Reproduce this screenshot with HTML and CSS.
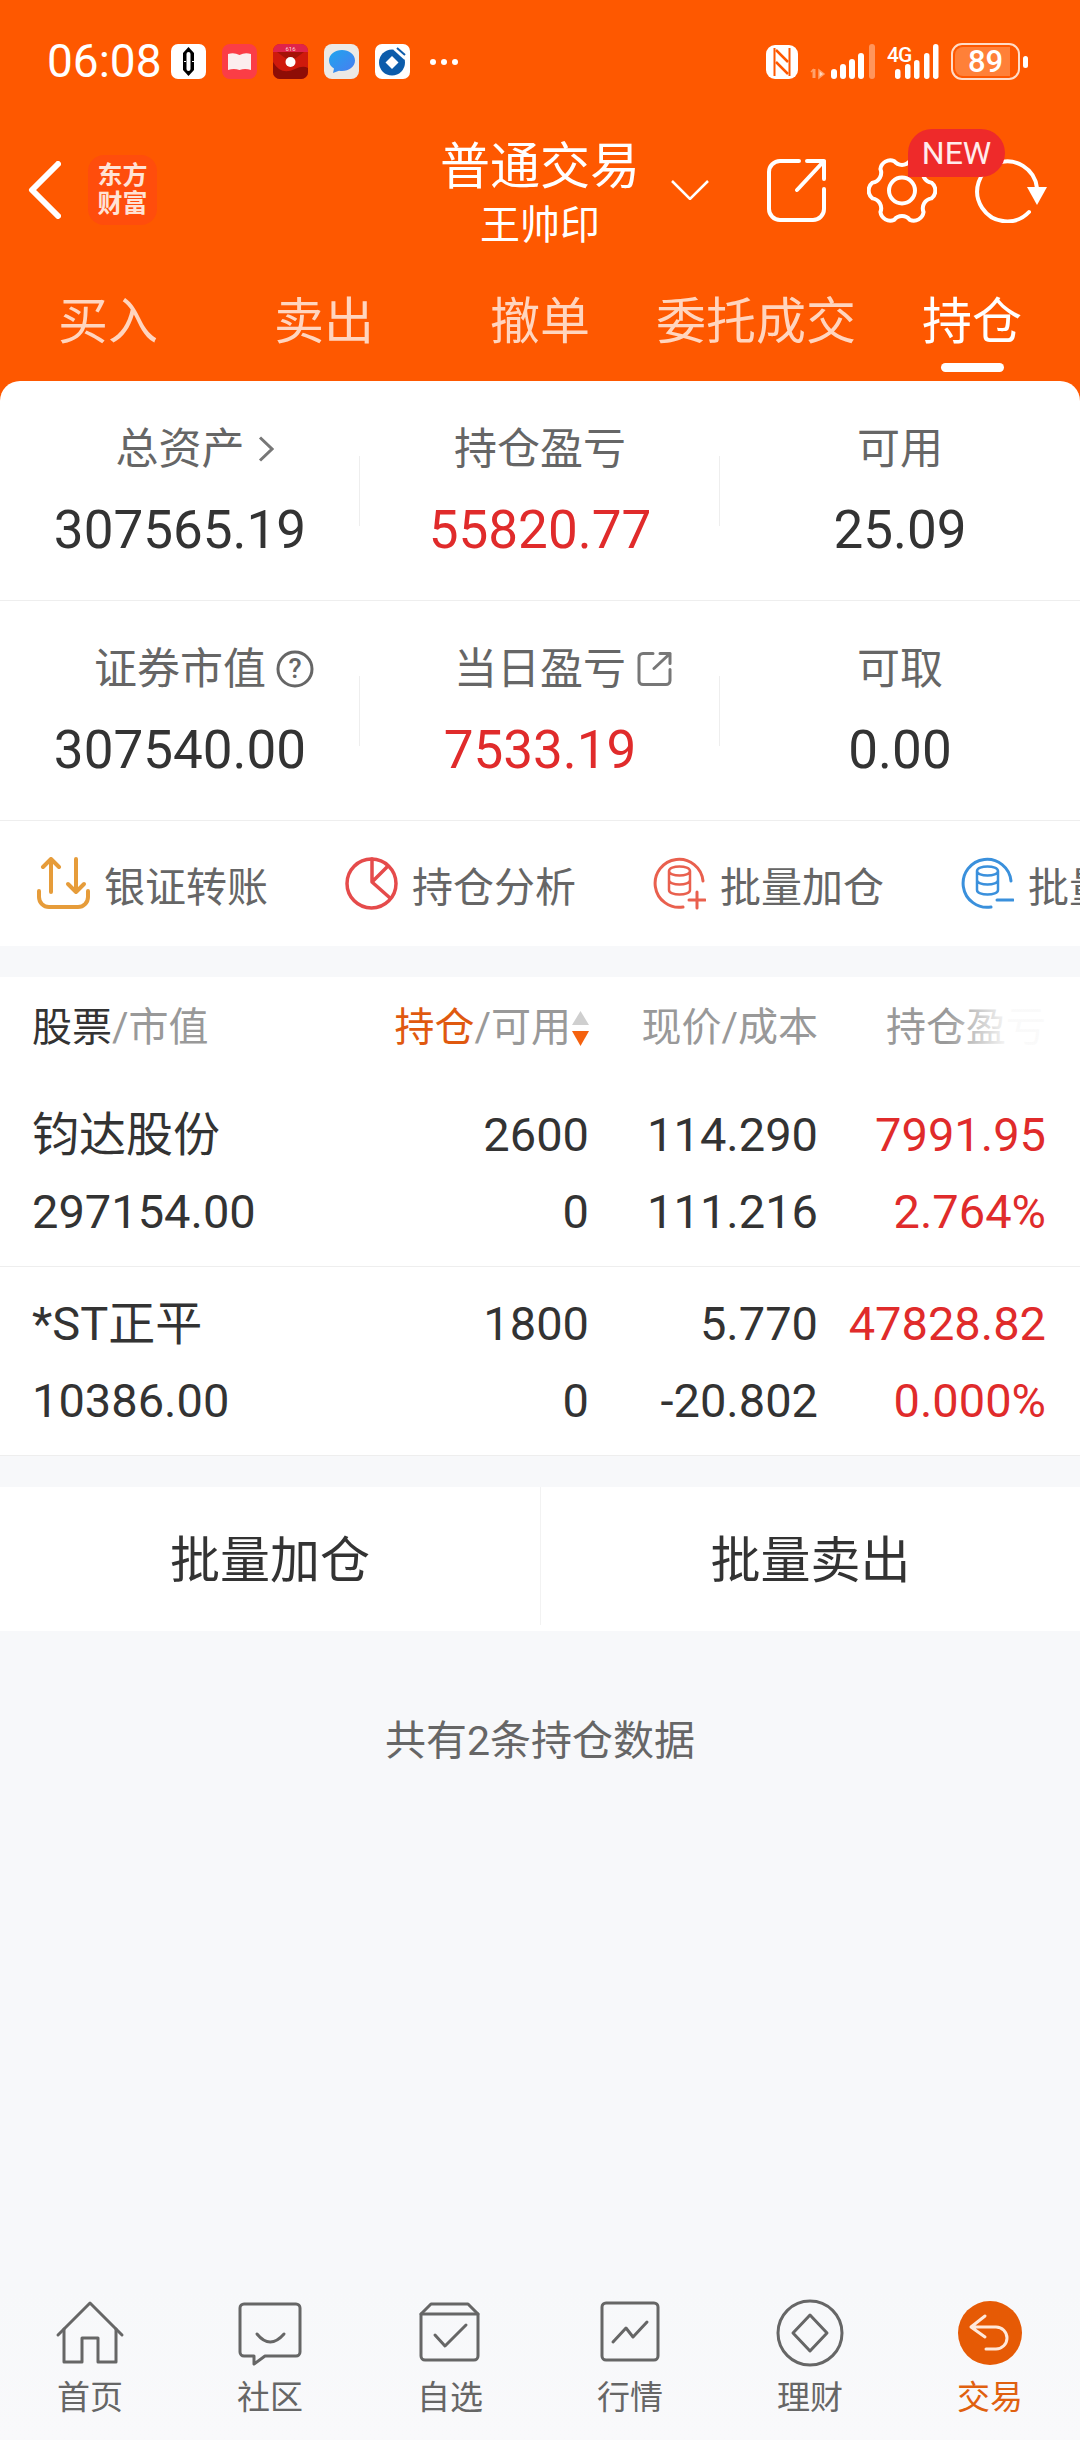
FILE: index.html
```html
<!DOCTYPE html>
<html lang="zh-CN">
<head>
    <meta charset="UTF-8">
    <meta name="viewport" content="width=device-width, initial-scale=1.0">
    <title>普通交易 - 持仓</title>
    <link rel="stylesheet" href="styles.css">
</head>
<body>
    <header class="app-header">
        <div class="status-bar">
            <div class="status-left">
                <span class="clock">06:08</span>
                <svg class="app-dot" viewBox="0 0 35 35"><rect width="35" height="35" rx="7" fill="#fff"/><path d="M17.5 3 23 9V26L17.5 32 12 26V9Z" fill="#000"/><rect x="15.5" y="8" width="4" height="19" rx="2" fill="#fff"/><path d="M9 17.5H26" stroke="#fff" stroke-width="1" stroke-dasharray="2 2"/></svg>
                <svg class="app-dot" viewBox="0 0 35 35"><rect width="35" height="35" rx="8" fill="#fb3d46"/><path d="M6 10Q12 8 17.5 11 23 8 29 10V26Q23 24 17.5 26 12 24 6 26Z" fill="#fbeeee"/></svg>
                <svg class="app-dot" viewBox="0 0 35 35"><rect width="35" height="35" rx="7" fill="#cf1a0c"/><path d="M0 18Q8 32 22 25 30 21 35 24V28a7 7 0 0 1-7 7H7a7 7 0 0 1-7-7Z" fill="#8e0d06"/><path d="M4 8H31L17.5 18Z" fill="#a51208"/><path d="M0 7a7 7 0 0 1 7-7H28a7 7 0 0 1 7 7V8H0Z" fill="#e0244a"/><text x="17.5" y="6.5" class="tiny-text" text-anchor="middle">616</text><circle cx="17.5" cy="18" r="5" fill="#fff"/></svg>
                <svg class="app-dot" viewBox="0 0 35 35"><defs><linearGradient id="bubble" x1="0" y1="0" x2="1" y2="1"><stop offset="0" stop-color="#1ea5ee"/><stop offset="1" stop-color="#4b7cf0"/></linearGradient></defs><rect width="35" height="35" rx="8" fill="#ece9e5"/><path d="M18 6C11 6 5 10.500 5 16.500 5 20 7 22.800 10 24.500L9 29 15 26.800C16 27 17 27 18 27 25 27 31 22.500 31 16.500S25 6 18 6Z" fill="url(#bubble)"/></svg>
                <svg class="app-dot" viewBox="0 0 35 35"><rect width="35" height="35" rx="7" fill="#fff"/><circle cx="17" cy="18.500" r="13" fill="#0c5cab"/><path d="M17 12 23.500 18.500 17 25 10.500 18.500Z" fill="#fff"/><path d="M20 4 31 14" stroke="#fff" stroke-width="5"/><path d="M22 4 30 11" stroke="#0c5cab" stroke-width="2"/></svg>
                <span class="more-dots"><i></i><i></i><i></i></span>
            </div>
            <div class="status-right">
                <svg class="nfc" viewBox="0 0 32 34"><rect width="32" height="34" rx="9" fill="#fff"/><path d="M8.500 3V31M23.500 3V31" stroke="#fe5800" stroke-width="2"/><path d="M10 5 22 17M10 17 22 29" stroke="#fe5800" stroke-width="2.500"/></svg>
                <svg class="signal-a" viewBox="0 0 65 36"><path d="M4 25V34" stroke="#ffa16b" stroke-width="3"/><path d="M1 28 4 25M9 26V34L14 30Z" stroke="#ffa16b" stroke-width="1.500" fill="#ffd7bf"/><g fill="#fff"><rect x="21" y="25" width="6" height="10" rx="3"/><rect x="30" y="20" width="6" height="15" rx="3"/><rect x="39" y="15" width="6" height="20" rx="3"/><rect x="48" y="9" width="6" height="26" rx="3"/></g><rect x="59" y="0" width="6" height="35" rx="3" fill="#ff955c"/></svg>
                <svg class="signal-b" viewBox="0 0 52 36"><text x="0" y="18" class="net-text">4G</text><g fill="#fff"><rect x="8" y="25" width="5.500" height="10" rx="2.700"/><rect x="18" y="20" width="5.500" height="15" rx="2.700"/><rect x="27" y="16" width="5.500" height="19" rx="2.700"/><rect x="37" y="9" width="5.500" height="26" rx="2.700"/><rect x="46" y="0" width="5.500" height="35" rx="2.700"/></g></svg>
                <div class="battery">
                    <div class="battery-body"><span class="battery-level"></span><span class="battery-num">89</span></div>
                    <span class="battery-nub"></span>
                </div>
            </div>
        </div>

        <div class="topbar">
            <div class="topbar-left">
                <svg class="back-icon" viewBox="0 0 33 58"><path d="M30 3 4 29 30 55" fill="none" stroke="#fff" stroke-width="6" stroke-linecap="round" stroke-linejoin="round"/></svg>
                <div class="brand"><span>东方</span><span>财富</span></div>
            </div>
            <div class="account">
                <div class="account-type">普通交易</div>
                <div class="account-name">王帅印</div>
            </div>
            <div class="topbar-right">
                <svg class="drop-icon" viewBox="0 0 38 20"><path d="M1 1 19 19 37 1" fill="none" stroke="#fff" stroke-width="2.500"/></svg>
                <svg class="share-icon" viewBox="0 0 60 65"><g fill="none" stroke="#fff" stroke-width="4" stroke-linecap="round" stroke-linejoin="round"><path d="M33 3H14A11 11 0 0 0 3 14V51A11 11 0 0 0 14 62H47A11 11 0 0 0 58 51V31"/><path d="M31 32 58 3M41 3H58V21"/></g></svg>
                <svg class="gear-icon" viewBox="0 0 70 67"><g fill="none" stroke="#fff" stroke-width="4" stroke-linejoin="round"><path d="M64.460 41.390A10 10 0 0 0 64.460 25.610 10 10 0 0 1 56.570 11.930 10 10 0 0 0 42.890 4.040 10 10 0 0 1 27.110 4.040 10 10 0 0 0 13.430 11.930 10 10 0 0 1 5.540 25.610 10 10 0 0 0 5.540 41.390 10 10 0 0 1 13.430 55.070 10 10 0 0 0 27.110 62.960 10 10 0 0 1 42.890 62.960 10 10 0 0 0 56.570 55.070 10 10 0 0 1 64.460 41.390Z"/><circle cx="35" cy="33.500" r="13"/></g></svg>
                <svg class="refresh-icon" viewBox="0 0 73 65"><path d="M55 54A30 30 0 1 1 63 30" fill="none" stroke="#fff" stroke-width="4" stroke-linecap="round"/><path d="M53 29H73L63 47Z" fill="#fff"/></svg>
                <span class="new-badge">NEW</span>
            </div>
        </div>

        <nav class="tabs">
            <a class="tab">买入</a>
            <a class="tab">卖出</a>
            <a class="tab">撤单</a>
            <a class="tab">委托成交</a>
            <a class="tab active">持仓</a>
        </nav>
    </header>

    <main class="content">
        <section class="summary">
            <div class="stat-row">
                <div class="stat">
                    <div class="stat-label">总资产
                        <svg class="label-icon chevron" viewBox="0 0 16 27"><path d="M2 2 14 13.500 2 25" fill="none" stroke="#777" stroke-width="3"/></svg>
                    </div>
                    <div class="stat-value">307565.19</div>
                </div>
                <div class="stat">
                    <div class="stat-label">持仓盈亏</div>
                    <div class="stat-value red">55820.77</div>
                </div>
                <div class="stat">
                    <div class="stat-label">可用</div>
                    <div class="stat-value">25.09</div>
                </div>
            </div>
            <div class="stat-row">
                <div class="stat">
                    <div class="stat-label">证券市值
                        <svg class="label-icon help" viewBox="0 0 38 38"><circle cx="19" cy="19" r="17" fill="none" stroke="#666" stroke-width="3"/><text x="19" y="28" class="help-text" text-anchor="middle">?</text></svg>
                    </div>
                    <div class="stat-value">307540.00</div>
                </div>
                <div class="stat">
                    <div class="stat-label">当日盈亏
                        <svg class="label-icon ext" viewBox="0 0 35 35"><g fill="none" stroke="#777" stroke-width="3" stroke-linecap="round" stroke-linejoin="round"><path d="M16 2H6A4 4 0 0 0 2 6V29A4 4 0 0 0 6 33H29A4 4 0 0 0 33 29V18"/><path d="M17 17 33 2M23 2H33V12"/></g></svg>
                    </div>
                    <div class="stat-value red">7533.19</div>
                </div>
                <div class="stat">
                    <div class="stat-label">可取</div>
                    <div class="stat-value">0.00</div>
                </div>
            </div>
        </section>

        <section class="quick-bar">
            <div class="quick-item">
                <svg class="quick-icon" viewBox="0 0 53 53"><g fill="none" stroke="#e69c3a" stroke-width="4" stroke-linecap="round" stroke-linejoin="round"><path d="M14 35V2M6 10 14 2 22 10"/><path d="M39 2V35M31 27 39 35 47 27"/><path d="M2 34V40A10 10 0 0 0 12 50H41A10 10 0 0 0 51 40V34"/></g></svg>
                <span>银证转账</span>
            </div>
            <div class="quick-item">
                <svg class="quick-icon" viewBox="0 0 53 53"><g fill="none" stroke="#e54b4b" stroke-width="3.500" stroke-linecap="round" stroke-linejoin="round"><circle cx="26.500" cy="26.500" r="24.500"/><path d="M27 2V25L42 10M27 25 45 41"/></g></svg>
                <span>持仓分析</span>
            </div>
            <div class="quick-item">
                <svg class="quick-icon" viewBox="0 0 53 53"><g fill="none" stroke="#e9604e" stroke-width="3" stroke-linecap="round"><path d="M50 24A24 24 0 1 0 30 50"/><path d="M16 14V33C16 39 37 39 37 33V14C37 8 16 8 16 14ZM16 14C16 20 37 20 37 14M16 23C16 29 37 29 37 23" stroke-width="2.500"/><path d="M36 43H52M44 35V51"/></g></svg>
                <span>批量加仓</span>
            </div>
            <div class="quick-item">
                <svg class="quick-icon" viewBox="0 0 53 53"><g fill="none" stroke="#3a90dc" stroke-width="3" stroke-linecap="round"><path d="M50 24A24 24 0 1 0 30 50"/><path d="M16 14V33C16 39 37 39 37 33V14C37 8 16 8 16 14ZM16 14C16 20 37 20 37 14M16 23C16 29 37 29 37 23" stroke-width="2.500"/><path d="M36 43H52"/></g></svg>
                <span>批量减仓</span>
            </div>
        </section>

        <section class="holdings">
            <div class="holdings-head">
                <div><span class="dark">股票</span>/市值</div>
                <div class="num sort-cell"><span class="accent">持仓</span>/可用
                    <svg class="sort-icon" viewBox="0 0 17 35"><path d="M8.500 0 17 14H0Z" fill="#cfcfcf"/><path d="M0 20H17L8.500 35Z" fill="#f5620f"/></svg>
                </div>
                <div class="num">现价/成本</div>
                <div class="num fade-cell">持仓盈亏</div>
            </div>
            <div class="holding-row">
                <div><p>钧达股份</p><p>297154.00</p></div>
                <div class="num"><p>2600</p><p>0</p></div>
                <div class="num"><p>114.290</p><p>111.216</p></div>
                <div class="num red"><p>7991.95</p><p>2.764%</p></div>
            </div>
            <div class="holding-row">
                <div><p>*ST正平</p><p>10386.00</p></div>
                <div class="num"><p>1800</p><p>0</p></div>
                <div class="num"><p>5.770</p><p>-20.802</p></div>
                <div class="num red"><p>47828.82</p><p>0.000%</p></div>
            </div>
        </section>

        <section class="batch-bar">
            <a class="batch-btn">批量加仓</a>
            <a class="batch-btn">批量卖出</a>
        </section>

        <p class="count-note">共有2条持仓数据</p>
    </main>

    <nav class="bottom-nav">
        <a class="nav-item">
            <svg viewBox="0 0 72 72"><g class="nav-stroke"><path d="M4 37 36 5 68 37"/><path d="M10 31V64H28V40H44V64H62V31"/></g></svg>
            <span>首页</span>
        </a>
        <a class="nav-item">
            <svg viewBox="0 0 72 72"><g class="nav-stroke"><path d="M10 6H62A4 4 0 0 1 66 10V54A4 4 0 0 1 62 58H31L20 66V58H10A4 4 0 0 1 6 54V10A4 4 0 0 1 10 6Z"/><path d="M23 36Q36 52 50 36"/></g></svg>
            <span>社区</span>
        </a>
        <a class="nav-item">
            <svg viewBox="0 0 72 72"><g class="nav-stroke"><path d="M7 16V58A4 4 0 0 0 11 62H60A4 4 0 0 0 64 58V16Z"/><path d="M7 16 17 6H54L64 16"/><path d="M21 37 31 48 52 27"/></g></svg>
            <span>自选</span>
        </a>
        <a class="nav-item">
            <svg viewBox="0 0 72 72"><g class="nav-stroke"><rect x="8" y="5" width="56" height="57" rx="4"/><path d="M19 44 32 30 39 39 53 24"/></g></svg>
            <span>行情</span>
        </a>
        <a class="nav-item">
            <svg viewBox="0 0 72 72"><g class="nav-stroke"><circle cx="36" cy="35" r="32"/><path d="M36 17 53 35 36 53 19 35Z"/></g></svg>
            <span>理财</span>
        </a>
        <a class="nav-item active">
            <svg viewBox="0 0 72 72"><circle cx="36" cy="35" r="32" fill="#e65a05"/><path d="M17 29H42A11 11 0 0 1 42 51H32M31 18 17 29 31 39" fill="none" stroke="#ffe8da" stroke-width="3" stroke-linecap="round" stroke-linejoin="round"/></svg>
            <span>交易</span>
        </a>
    </nav>
</body>
</html>
```

FILE: styles.css
```css
* {
    box-sizing: border-box;
}
body {
    font-family: Roboto, "Noto Sans CJK SC", sans-serif;
    background: #f7f8fa;
    color: #333;
    margin: 0;
    width: 1080px;
    height: 2440px;
    overflow: hidden;
    display: flex;
    flex-direction: column;
}
p {
    margin: 0;
}

/* Orange header */
.app-header {
    background: #fe5800;
    color: #fff;
    height: 401px;
    flex-shrink: 0;
}
.status-bar {
    height: 120px;
    padding: 44px 52px 0 47px;
    display: flex;
    justify-content: space-between;
    align-items: flex-start;
}
.status-left {
    display: flex;
    align-items: center;
    gap: 16px;
    height: 35px;
}
.clock {
    font-size: 46px;
    line-height: 35px;
    width: 108px;
    white-space: nowrap;
}
.app-dot {
    width: 35px;
    height: 35px;
}
.tiny-text {
    font-size: 6px;
    fill: #ffd9d9;
}
.more-dots {
    display: flex;
    gap: 5px;
    margin-left: 4px;
}
.more-dots i {
    width: 6px;
    height: 6px;
    border-radius: 50%;
    background: #fff;
}
.status-right {
    display: flex;
    align-items: center;
    height: 35px;
}
.nfc {
    width: 32px;
    height: 34px;
}
.signal-a {
    width: 65px;
    height: 36px;
    margin-left: 12px;
}
.signal-b {
    width: 52px;
    height: 36px;
    margin-left: 12px;
}
.net-text {
    font-size: 21px;
    font-weight: 500;
    fill: #fff;
    letter-spacing: -1px;
}
.battery {
    display: flex;
    align-items: center;
    gap: 3px;
    margin-left: 12px;
}
.battery-body {
    position: relative;
    width: 69px;
    height: 37px;
    border: 2px solid #ffdcc7;
    border-radius: 11px;
    overflow: hidden;
    display: flex;
    align-items: center;
    justify-content: center;
}
.battery-level {
    position: absolute;
    top: 2px;
    bottom: 2px;
    left: 2px;
    width: 55px;
    border-radius: 8px 0 0 8px;
    background: #ff8038;
}
.battery-num {
    position: relative;
    font-size: 31px;
    line-height: 33px;
    font-weight: 500;
}
.battery-nub {
    width: 5px;
    height: 12px;
    border-radius: 3px;
    background: #fff;
}

.topbar {
    height: 140px;
    display: grid;
    grid-template-columns: 1fr auto 1fr;
    align-items: center;
}
.topbar-left {
    display: flex;
    align-items: center;
    padding-left: 28px;
    gap: 27px;
}
.back-icon {
    width: 33px;
    height: 58px;
}
.brand {
    width: 69px;
    height: 70px;
    border-radius: 16px;
    background: #ff4d0c;
    color: #ffe3d6;
    font-size: 25px;
    font-weight: 700;
    line-height: 28px;
    display: flex;
    flex-direction: column;
    align-items: center;
    justify-content: center;
}
.account {
    text-align: center;
    width: 204px;
    padding-top: 10px;
}
.account-type {
    font-size: 50px;
    line-height: 56px;
}
.account-name {
    font-size: 40px;
    line-height: 50px;
    margin-top: 6px;
}
.topbar-right {
    position: relative;
    display: flex;
    align-items: center;
    height: 70px;
    padding-left: 29px;
}
.drop-icon {
    width: 38px;
    height: 20px;
}
.share-icon {
    width: 60px;
    height: 65px;
    margin-left: 57px;
}
.gear-icon {
    width: 70px;
    height: 67px;
    margin-left: 41px;
}
.refresh-icon {
    width: 73px;
    height: 65px;
    margin-left: 37px;
}
.new-badge {
    position: absolute;
    left: 266px;
    top: -26px;
    width: 97px;
    height: 48px;
    border-radius: 24px 24px 24px 0;
    background: #ee2a2a;
    color: #ffecec;
    font-size: 32px;
    line-height: 48px;
    text-align: center;
}

.tabs {
    display: flex;
    height: 121px;
}
.tab {
    flex: 1;
    display: flex;
    flex-direction: column;
    align-items: center;
    padding-top: 32px;
    font-size: 50px;
    line-height: 60px;
    color: #ffd5bf;
}
.tab.active {
    color: #fff;
}
.tab.active::after {
    content: "";
    width: 63px;
    height: 9px;
    margin-top: 11px;
    border-radius: 5px;
    background: #fff;
}

/* White sheet with the account numbers */
.content {
    flex: 1;
    margin-top: -20px;
}
.summary {
    background: #fff;
    border-radius: 20px 20px 0 0;
}
.stat-row {
    display: grid;
    grid-template-columns: repeat(3, 1fr);
    height: 220px;
    padding-top: 43px;
    border-bottom: 1px solid #eee;
}
.stat {
    position: relative;
    text-align: center;
}
.stat + .stat::before {
    content: "";
    position: absolute;
    left: -1px;
    top: 32px;
    width: 1px;
    height: 70px;
    background: #eee;
}
.stat-label {
    position: relative;
    display: inline-block;
    font-size: 43px;
    line-height: 50px;
    color: #666;
}
.stat-value {
    font-size: 53px;
    line-height: 60px;
    margin-top: 26px;
}
.red {
    color: #e02b2b;
}
.label-icon {
    position: absolute;
    top: 50%;
    transform: translateY(-50%);
}
.chevron {
    left: calc(100% + 13px);
    width: 16px;
    height: 27px;
}
.help {
    left: calc(100% + 10px);
    width: 38px;
    height: 38px;
}
.help-text {
    font-size: 27px;
    font-weight: 500;
    fill: #666;
}
.ext {
    left: calc(100% + 11px);
    width: 35px;
    height: 35px;
}

.quick-bar {
    height: 125px;
    background: #fff;
    display: flex;
    align-items: center;
    gap: 77px;
    padding-left: 37px;
    overflow: hidden;
}
.quick-item {
    display: flex;
    align-items: center;
    gap: 14px;
    flex-shrink: 0;
    font-size: 41px;
    color: #666;
}
.quick-icon {
    width: 53px;
    height: 53px;
}

/* Holdings table */
.holdings {
    margin-top: 31px;
    background: #fff;
}
.holdings-head,
.holding-row {
    display: grid;
    grid-template-columns: 300px 257px 229px 228px;
    padding: 0 34px 0 32px;
}
.holdings-head {
    height: 101px;
    align-items: center;
    font-size: 40px;
    line-height: 50px;
    color: #999;
}
.holding-row {
    padding-top: 18px;
    height: 189px;
    font-size: 47px;
    line-height: 77px;
    border-bottom: 1px solid #eee;
}
.num {
    text-align: right;
}
.dark {
    color: #333;
}
.accent {
    color: #e0590f;
}
.sort-cell {
    position: relative;
    padding-right: 18px;
}
.sort-icon {
    position: absolute;
    right: 0;
    top: 8px;
    width: 17px;
    height: 35px;
}
.fade-cell {
    position: relative;
}
.fade-cell::after {
    content: "";
    position: absolute;
    right: -5px;
    top: 0;
    bottom: 0;
    width: 105px;
    background: linear-gradient(to right, rgba(255, 255, 255, 0), rgba(255, 255, 255, 0.95) 60%);
}

.batch-bar {
    margin-top: 31px;
    height: 144px;
    padding-bottom: 6px;
    background: #fff;
    display: grid;
    grid-template-columns: 1fr 1fr;
}
.batch-btn {
    display: flex;
    align-items: center;
    justify-content: center;
    font-size: 50px;
    color: #333;
}
.batch-btn + .batch-btn {
    border-left: 1px solid #f2f2f2;
}
.count-note {
    margin-top: 85px;
    font-size: 41px;
    line-height: 50px;
    color: #666;
    text-align: center;
}

/* Bottom navigation */
.bottom-nav {
    height: 150px;
    flex-shrink: 0;
    background: linear-gradient(#f7f8fa, #f9f9fb);
    display: grid;
    grid-template-columns: repeat(6, 1fr);
    padding-top: 8px;
}
.nav-item {
    display: flex;
    flex-direction: column;
    align-items: center;
    font-size: 33px;
    line-height: 40px;
    color: #666;
}
.nav-item svg {
    width: 72px;
    height: 72px;
    margin-bottom: 8px;
}
.nav-item.active {
    color: #e0600f;
}
.nav-stroke {
    fill: none;
    stroke: #666;
    stroke-width: 3;
    stroke-linecap: round;
    stroke-linejoin: round;
}
```
